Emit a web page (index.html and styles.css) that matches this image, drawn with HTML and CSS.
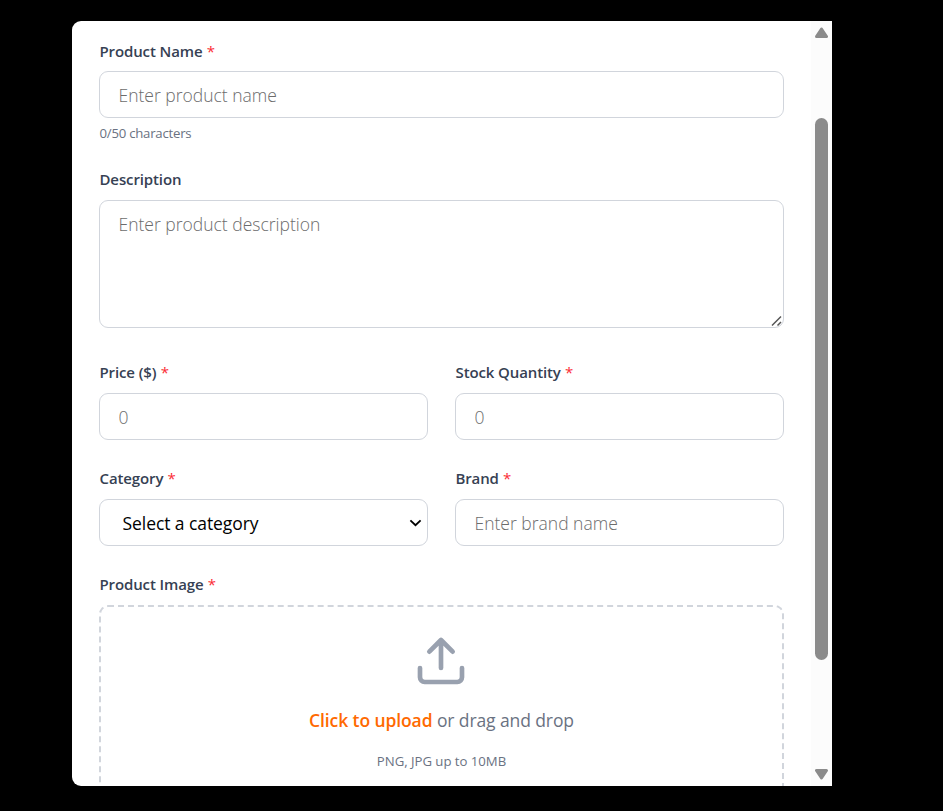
FILE: index.html
```html
<!DOCTYPE html>
<html lang="en">
<head>
<meta charset="utf-8">
<title>Add Product</title>
<link rel="stylesheet" href="styles.css">
</head>
<body>
<main class="modal">
  <form class="form">
    <div class="field field-name">
      <label class="label label-first" for="name">Product Name <span class="req">*</span></label>
      <input class="control" id="name" placeholder="Enter product name">
      <p class="helper">0/50 characters</p>
    </div>
    <div class="field field-desc">
      <label class="label" for="desc">Description</label>
      <div class="area-wrap">
        <textarea class="control area" id="desc" placeholder="Enter product description"></textarea>
        <svg class="grip" viewBox="0 0 12 12"><path d="M1 10.5 10 1.5M6.5 10.5 10 7" /></svg>
      </div>
    </div>
    <div class="grid">
      <div class="field">
        <label class="label" for="price">Price ($) <span class="req">*</span></label>
        <input class="control" id="price" placeholder="0">
      </div>
      <div class="field">
        <label class="label" for="stock">Stock Quantity <span class="req">*</span></label>
        <input class="control" id="stock" placeholder="0">
      </div>
      <div class="field">
        <label class="label" for="category">Category <span class="req">*</span></label>
        <div class="select-wrap">
          <select class="control select" id="category"><option>Select a category</option></select>
          <svg class="chevron" viewBox="0 0 14 8"><path d="M1.5 1.2 7 6.4 12.5 1.2" /></svg>
        </div>
      </div>
      <div class="field">
        <label class="label" for="brand">Brand <span class="req">*</span></label>
        <input class="control" id="brand" placeholder="Enter brand name">
      </div>
    </div>
    <div class="field">
      <div class="label">Product Image <span class="req">*</span></div>
      <div class="dropzone">
        <svg class="upload" viewBox="0 0 24 24"><path d="M21 15v4a2 2 0 0 1-2 2H5a2 2 0 0 1-2-2v-4M17 8l-5-5-5 5M12 3v12" /></svg>
        <p class="prompt"><span class="link">Click to upload</span> <span class="rest">or drag and drop</span></p>
        <p class="hint">PNG, JPG up to 10MB</p>
      </div>
    </div>
  </form>
  <div class="scrollbar">
    <svg class="arrow" viewBox="0 0 13 11"><path d="M6.5 2 11.5 9.5H1.5Z" /></svg>
    <div class="thumb"></div>
    <svg class="arrow arrow-down" viewBox="0 0 13 11"><path d="M6.5 9 1.5 1.5h10Z" /></svg>
  </div>
</main>
</body>
</html>
```
FILE: styles.css
```css
* { box-sizing: border-box; }

body {
  margin: 0;
  height: 811px;
  padding: 21px 0 0 72px;
  overflow: hidden;
  background: #000;
  font-family: "Open Sans", "Noto Sans", sans-serif;
}

.modal {
  display: flex;
  width: 760px;
  height: 765px;
  overflow: hidden;
  background: #fff;
  border-radius: 9px 0 0 9px;
}

.form {
  flex: 1;
  padding: 20px 27px 0;
}

.field { min-width: 0; }
.field-name { margin-bottom: 27px; }
.field-desc { margin-bottom: 35px; }

.label {
  display: block;
  height: 21px;
  margin-bottom: 9px;
  padding-left: 0.5px;
  color: #364153;
  font-size: 15px;
  font-weight: 600;
  line-height: 19px;
  letter-spacing: -0.12px;
  white-space: nowrap;
}

.label-first { line-height: 21px; }

.req {
  margin-left: 0.5px;
  color: #fb2c36;
  font-weight: 500;
}

.control {
  display: block;
  width: 100%;
  height: 47px;
  margin: 0;
  padding: 0 18.5px;
  border: 1px solid #d1d5dc;
  border-radius: 9px;
  outline: 0;
  background: #fff;
  color: #000;
  font-family: inherit;
  font-size: 17.5px;
  letter-spacing: 0;
}

.control::placeholder {
  color: #6c6c6c;
  font-weight: 330;
  opacity: 1;
}

.helper {
  height: 20px;
  margin: 5px 0 0 0.5px;
  color: #6a7282;
  font-size: 13.2px;
  line-height: 20px;
  letter-spacing: -0.24px;
}

.area-wrap, .select-wrap { position: relative; }

.area {
  height: 128px;
  padding-top: 9px;
  line-height: 28px;
  resize: none;
}

.grip {
  position: absolute;
  right: 1px;
  bottom: 1px;
  width: 12px;
  height: 12px;
  fill: none;
  stroke: #555;
  stroke-width: 1.5;
}

.grid {
  display: grid;
  grid-template-columns: 1fr 1fr;
  gap: 29px 27px;
  margin-bottom: 29px;
}

.select {
  appearance: none;
  padding-left: 22.5px;
  letter-spacing: -0.07px;
}

.chevron {
  position: absolute;
  right: 6px;
  top: 20px;
  width: 13px;
  height: 8px;
  fill: none;
  stroke: #000;
  stroke-width: 2;
}

.dropzone {
  display: flex;
  flex-direction: column;
  align-items: center;
  height: 205px;
  padding-top: 26px;
  border: 2px dashed #d1d5dc;
  border-radius: 9px;
}

.upload {
  flex: none;
  width: 56px;
  height: 56px;
  margin-right: 1px;
  fill: none;
  stroke: #99a1af;
  stroke-width: 2;
  stroke-linecap: round;
  stroke-linejoin: round;
}

.prompt {
  height: 28px;
  margin: 17px 0 0;
  color: #6a7282;
  font-size: 17.5px;
  line-height: 28px;
  letter-spacing: -0.1px;
  white-space: nowrap;
}

.link {
  color: #ff6900;
  font-weight: 600;
}

.hint {
  height: 20px;
  margin: 17px 0 0;
  color: #6a7282;
  font-size: 13.2px;
  line-height: 20px;
  letter-spacing: -0.03px;
}

.scrollbar {
  display: flex;
  flex-direction: column;
  align-items: center;
  width: 21px;
  padding: 6px 0;
  background: #fcfcfc;
}

.arrow {
  width: 13px;
  height: 11px;
  fill: #8b8b8b;
  stroke: #8b8b8b;
  stroke-width: 3;
  stroke-linejoin: round;
}

.thumb {
  width: 13px;
  height: 542px;
  margin-top: 80px;
  border-radius: 7px;
  background: #8b8b8b;
}

.arrow-down { margin-top: auto; }
```
